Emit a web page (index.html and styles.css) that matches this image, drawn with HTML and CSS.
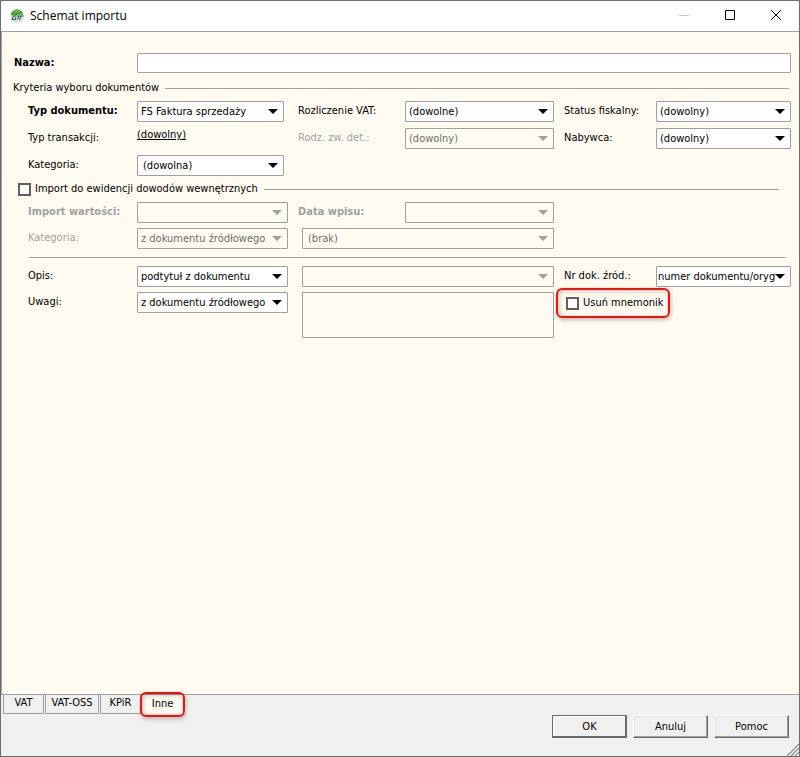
FILE: index.html
```html
<!DOCTYPE html>
<html lang="pl">
<head>
  <meta charset="UTF-8" />
  <meta name="viewport" content="width=device-width, initial-scale=1.0"/>
  <title>Schemat importu</title>
  <link rel="stylesheet" href="styles.css">
</head>
<body>
  <div class="window">
    <header class="titlebar">
      <svg class="logo" viewBox="0 0 14 14" aria-hidden="true">
        <circle cx="7" cy="7" r="7" fill="#dcdedc"/>
        <path d="M1 6a6 5.500 0 0 1 12 0Q10 5 7 6T1 6z" fill="#43a528"/>
        <path d="M3 3.500Q7 0 11 3.500Q7 2 3 3.500z" fill="#9bd36a"/>
        <path d="M6.500 7H3.500L2 10.500H5.500L6 9H4.500M7.500 10.500L9 7M7 7H13.500M11 7L9.500 11" fill="none" stroke="#2b5f4c"/>
      </svg>
      <h1>Schemat importu</h1>
      <div class="window-buttons">
        <button type="button" aria-label="Minimalizuj" disabled>
          <svg viewBox="0 0 12 12"><path d="M1 5.500h10" stroke="#c8c8c8"/></svg>
        </button>
        <button type="button" aria-label="Maksymalizuj">
          <svg viewBox="0 0 12 12"><path d="M1.500 .5h9v9h-9z" fill="none" stroke="#000"/></svg>
        </button>
        <button type="button" aria-label="Zamknij">
          <svg viewBox="0 0 12 12"><path d="M1 0l10 10M11 0L1 10" stroke="#000"/></svg>
        </button>
      </div>
    </header>

    <form class="scheme" id="schemeForm">
      <div class="name-row">
        <label class="required" for="name">Nazwa:</label>
        <input type="text" id="name">
      </div>

      <h2 class="group-title">Kryteria wyboru dokumentów</h2>
      <div class="fields criteria">
        <label class="first required" for="docType">Typ dokumentu:</label>
        <select class="short" id="docType"><option>FS Faktura sprzedaży</option></select>
        <label for="vat">Rozliczenie VAT:</label>
        <select id="vat"><option>(dowolne)</option></select>
        <label for="fiscal">Status fiskalny:</label>
        <select id="fiscal"><option>(dowolny)</option></select>

        <span class="caption">Typ transakcji:</span>
        <a class="picker" href="#">(dowolny)</a>
        <label class="off" for="retail">Rodz. zw. det.:</label>
        <select id="retail" disabled><option>(dowolny)</option></select>
        <label for="buyer">Nabywca:</label>
        <select id="buyer"><option>(dowolny)</option></select>

        <label class="first" for="category">Kategoria:</label>
        <select class="short indent" id="category"><option>(dowolna)</option></select>
      </div>

      <div class="group-title internal">
        <label class="check"><input type="checkbox" id="internal">Import do ewidencji dowodów wewnętrznych</label>
      </div>
      <div class="fields">
        <label class="first required off" for="values">Import wartości:</label>
        <select id="values" disabled><option></option></select>
        <label class="required off" for="entryDate">Data wpisu:</label>
        <select id="entryDate" disabled><option></option></select>

        <label class="first off" for="source">Kategoria:</label>
        <select id="source" disabled><option>z dokumentu źródłowego</option></select>
        <select class="wide indent" aria-label="Kategoria ewidencji" disabled><option>(brak)</option></select>
      </div>

      <hr>

      <div class="fields">
        <label class="first" for="description">Opis:</label>
        <select id="description"><option>podtytuł z dokumentu</option></select>
        <select class="wide" aria-label="Treść opisu" disabled><option></option></select>
        <label for="number">Nr dok. źród.:</label>
        <select class="tight" id="number"><option>numer dokumentu/oryg</option></select>

        <label class="first" for="notes">Uwagi:</label>
        <select id="notes"><option>z dokumentu źródłowego</option></select>
        <textarea class="wide" aria-label="Treść uwag" disabled></textarea>
        <div class="mnemonic">
          <label class="check marked"><input type="checkbox" id="mnemonic">Usuń mnemonik</label>
        </div>
      </div>
    </form>

    <footer>
      <nav class="tabs">
        <button type="button">VAT</button>
        <button type="button" class="long">VAT-OSS</button>
        <button type="button">KPiR</button>
        <button type="button" class="active marked">Inne</button>
      </nav>
      <div class="actions">
        <button type="submit" form="schemeForm" class="default">OK</button>
        <button type="button">Anuluj</button>
        <button type="button">Pomoc</button>
      </div>
      <svg class="grip" viewBox="0 0 13 13" aria-hidden="true">
        <path d="M0 12L12 0M4 12L12 4M8 12L12 8" stroke="#fff" stroke-width="1"/>
        <path d="M1 13L13 1M5 13L13 5M9 13L13 9" stroke="#999" stroke-width="1.500"/>
      </svg>
    </footer>
  </div>
</body>
</html>
```
FILE: styles.css
```css
* {
  box-sizing: border-box;
}

body {
  margin: 0;
  font-family: "DejaVu Sans Condensed", "Noto Sans", sans-serif;
  font-size: 11px;
  line-height: 14px;
  color: #000;
}

button, input, select, textarea {
  font: inherit;
  color: inherit;
  margin: 0;
}

.window {
  display: flex;
  flex-direction: column;
  min-height: 100vh;
  border: 1px solid #6d6d6d;
  background: #f0f0f0;
}

/* title bar */
.titlebar {
  display: flex;
  align-items: center;
  height: 30px;
  padding-left: 9px;
  background: #fff;
}

.logo {
  width: 14px;
  height: 14px;
}

h1 {
  flex: 1;
  margin: 0 0 0 6px;
  font-family: "Open Sans", sans-serif;
  font-size: 12px;
  font-weight: normal;
}

.window-buttons {
  display: flex;
}

.window-buttons button {
  width: 46px;
  height: 30px;
  padding: 0;
  border: none;
  background: none;
}

.window-buttons svg {
  display: block;
  width: 12px;
  height: 12px;
  margin: auto;
}

/* form */
.scheme {
  flex: 1;
  padding: 21px 8px 0 12px;
  border: 1px solid #a0a0a0;
  border-right: none;
  background: #fffbf0;
}

.name-row {
  display: grid;
  grid-template-columns: 123px 1fr;
  align-items: center;
}

.name-row input {
  width: 100%;
  height: 20px;
}

input[type="text"], select, textarea {
  min-width: 0;
  padding: 0 3px;
  border: 1px solid #a0a0a0;
  border-radius: 1px;
  background: #fff;
}

.required {
  font-weight: bold;
}

.group-title {
  display: flex;
  align-items: center;
  gap: 6px;
  margin: 8px 2px 6px -1px;
  font-size: 11px;
  font-weight: normal;
}

.group-title::after {
  content: "";
  flex: 1;
  border-top: 1px solid #a0a0a0;
}

.fields {
  display: grid;
  grid-template-columns: 109px 151fr 117px 149fr 102px 135fr;
  row-gap: 5px;
  margin-left: 14px;
}

.fields > label, .caption {
  padding: 3px 0 0 10px;
}

.fields > .first, .caption {
  grid-column: 1;
  padding-left: 0;
}

select {
  height: 21px;
  padding-right: 16px;
  appearance: none;
  background: #fff url("data:image/svg+xml,%3Csvg xmlns='http://www.w3.org/2000/svg' width='10' height='5'%3E%3Cpath d='M0 0h10L5 5z'/%3E%3C/svg%3E") no-repeat right 5px center;
}

select:disabled, textarea:disabled {
  color: #6d6d6d;
  background-color: #fffbf0;
  opacity: 1;
}

select:disabled {
  background-image: url("data:image/svg+xml,%3Csvg xmlns='http://www.w3.org/2000/svg' width='10' height='5'%3E%3Cpath d='M0 0h10L5 5z' fill='%23a0a0a0'/%3E%3C/svg%3E");
}

.off {
  color: #a0a0a0;
  text-shadow: 1px 1px #fff;
}

.short {
  margin-right: 4px;
}

.indent {
  padding-left: 5px;
}

.tight {
  padding: 0 14px 0 1px;
}

.wide {
  grid-column: 3 / 5;
  margin-left: 14px;
}

.criteria {
  row-gap: 6px;
}

.picker {
  justify-self: start;
  color: #000;
}

.check {
  display: inline-flex;
  align-items: center;
  gap: 4px;
}

.check input {
  width: 13px;
  height: 13px;
  appearance: none;
  border: 2px solid #606060;
  background: #fff;
}

.internal {
  margin: 6px 12px 6px 4px;
}

hr {
  margin: 8px 6px 8px 15px;
  border: none;
  border-top: 1px solid #a0a0a0;
}

textarea {
  height: 46px;
  resize: none;
}

.mnemonic {
  grid-column: 5 / 7;
  padding: 4px 0 0 12px;
}

/* red frame round the options to pay attention to */
.marked {
  position: relative;
}

.marked::after {
  content: "";
  position: absolute;
  inset: -8px -6px -8px -10px;
  border: 2px solid #f01010;
  border-radius: 6px;
  box-shadow: 1px 2px 4px rgba(0,0,0,0.25), inset 1px 1px 5px rgba(0,0,0,0.25);
  pointer-events: none;
}

/* footer */
footer {
  position: relative;
  padding-bottom: 18px;
}

.tabs {
  display: flex;
  gap: 1px;
  padding-left: 2px;
}

.tabs button {
  min-width: 41px;
  height: 19px;
  padding: 0 4px 2px;
  border: 1px solid #a0a0a0;
  border-top: none;
  background: #f0f0f0;
}

.tabs .long {
  min-width: 54px;
}

.tabs .active {
  border: none;
  background: #fffbf0;
}

.tabs .marked::after {
  inset: -3px -2px;
}

.actions {
  display: flex;
  justify-content: flex-end;
  gap: 6px;
  margin-top: 1px;
  padding-right: 10px;
}

.actions button {
  width: 75px;
  height: 23px;
  padding: 0;
  border: 1px solid;
  border-color: #fff #696969 #696969 #fff;
  background: #f0f0f0;
  box-shadow: inset -1px -1px #a0a0a0, inset 1px 1px #e3e3e3;
}

.actions .default {
  border-color: #696969;
  box-shadow: inset -1px -1px #696969, inset 1px 1px #fff;
}

.grip {
  position: absolute;
  right: 0;
  bottom: 0;
  width: 13px;
  height: 13px;
}
```
